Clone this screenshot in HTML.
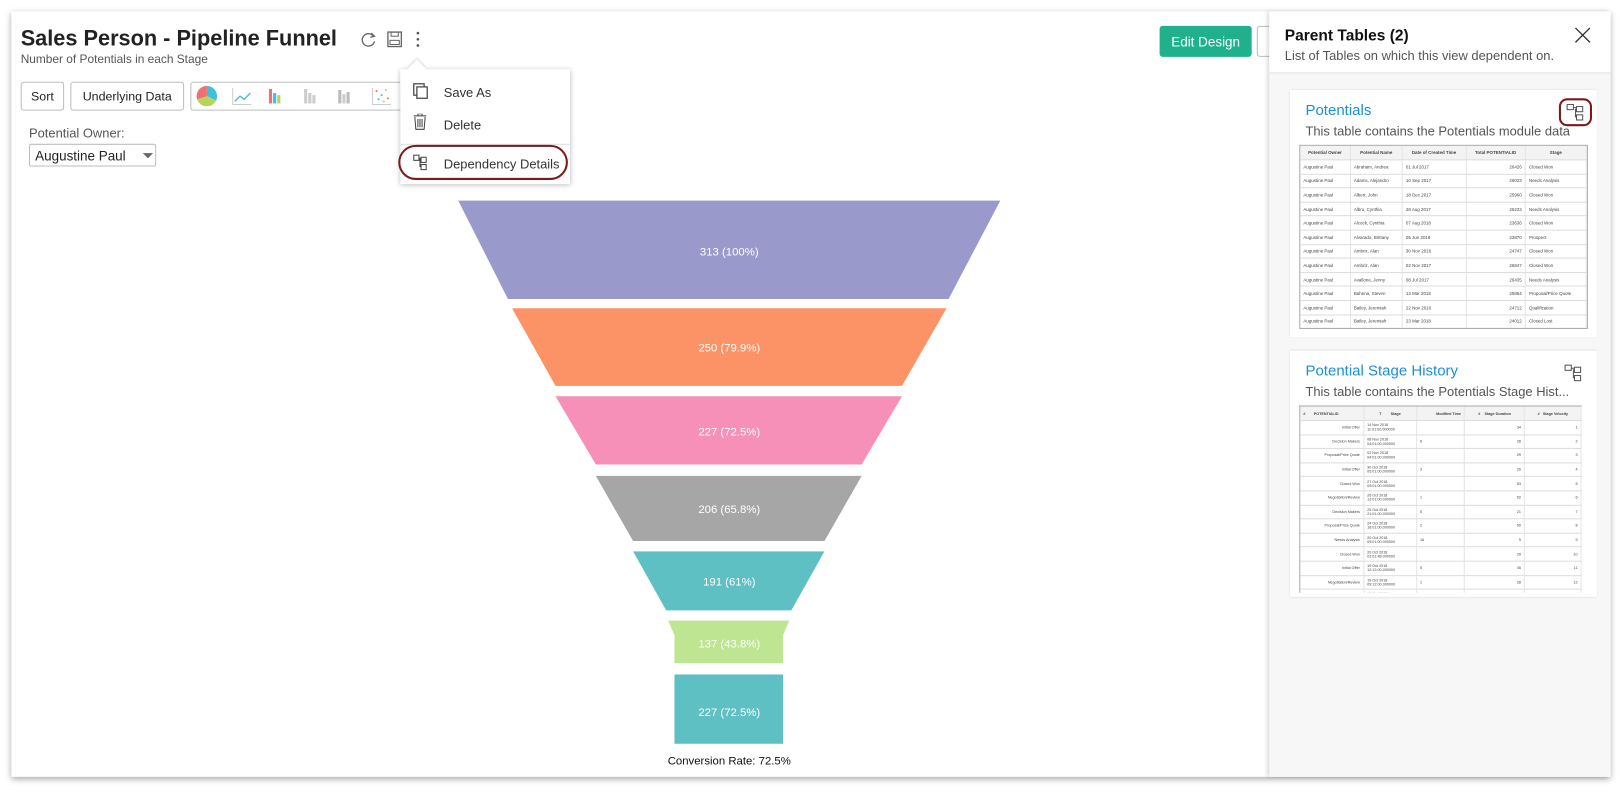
<!DOCTYPE html>
<html><head><meta charset="utf-8">
<style>
html,body{margin:0;padding:0;background:#fff;overflow:hidden}
body{width:1622px;height:798px;position:relative;font-family:"Liberation Sans",sans-serif}
#s{position:absolute;left:0;top:0;width:1568px;height:772px;transform:scale(1.03444);transform-origin:0 0}
.a{position:absolute}
.frame{left:11px;top:11px;width:1546px;height:740px;background:#fff;box-shadow:0 2px 6px rgba(0,0,0,.35)}
.btn{position:absolute;border:1px solid #bdbdbd;border-radius:3px;background:#fff;font-size:12px;color:#222;display:flex;align-items:center;justify-content:center;box-sizing:border-box}
.menu{left:387px;top:67px;width:164px;height:111px;background:#fff;box-shadow:0 1px 5px rgba(0,0,0,.3)}
.mi{position:absolute;left:42px;font-size:12.5px;color:#333}
.panel{left:1227px;top:11px;width:330px;height:740px;background:#f7f7f7;box-shadow:-2px 0 4px rgba(0,0,0,.15)}
.card{position:absolute;left:20px;width:297px;background:#fff;box-shadow:0 0 2px rgba(0,0,0,.15)}
.ct{position:absolute;left:15px;font-size:14.5px;color:#1a8fdc}
.cd{position:absolute;left:15px;font-size:12.5px;color:#555;white-space:nowrap}
table{border-collapse:collapse;font-size:4.3px;color:#444;width:100%}
td,th{border-bottom:1px solid #ddd;border-right:1px solid #e4e4e4;padding:0 3px;height:12.6px;white-space:nowrap}
th{background:#f3f3f3;font-weight:bold;height:13px}
.tb{position:absolute;border:1px solid #aaa;overflow:hidden;background:#fff}
.r{text-align:right}
</style></head><body><div id="s">
<div class="a frame"></div>
<div class="a" style="left:20px;top:26px;font-size:21px;font-weight:bold;color:#222">Sales Person - Pipeline Funnel</div>
<div class="a" style="left:20px;top:52px;font-size:11.5px;color:#555">Number of Potentials in each Stage</div>
<svg class="a" style="left:347px;top:29px" width="70" height="20" viewBox="0 0 70 20">
<path d="M14 6 A6 6 0 1 0 15 11" fill="none" stroke="#666" stroke-width="1.3"/><path d="M12 3 L15 6 L11 7" fill="none" stroke="#666" stroke-width="1.3"/>
<rect x="28" y="2" width="13" height="14" fill="none" stroke="#666" stroke-width="1.3"/><rect x="31" y="2" width="7" height="4" fill="none" stroke="#666"/><rect x="30" y="10" width="9" height="4" fill="none" stroke="#666"/>
<circle cx="57" cy="3" r="1.3" fill="#555"/><circle cx="57" cy="9" r="1.3" fill="#555"/><circle cx="57" cy="15" r="1.3" fill="#555"/>
</svg>
<div class="btn" style="left:20px;top:79px;width:42px;height:28px">Sort</div>
<div class="btn" style="left:68px;top:79px;width:110px;height:28px">Underlying Data</div>
<div class="btn" style="left:184px;top:79px;width:210px;height:28px"></div>
<svg class="a" style="left:190px;top:83px" width="200" height="20" viewBox="0 0 200 20">
<path d="M10 10 L10 0 A10 10 0 0 1 19 14 Z" fill="#3ec0d8"/><path d="M10 10 L19 14 A10 10 0 0 1 0.5 13 Z" fill="#b6d35a"/><path d="M10 10 L0.5 13 A10 10 0 0 1 10 0 Z" fill="#ef7070"/>
<path d="M35 18 L53 18 M35 2 L35 18" stroke="#ccc"/><path d="M37 15 L42 10 L46 13 L52 7" fill="none" stroke="#3ec0d8" stroke-width="1.3"/>
<rect x="70" y="3" width="3" height="14" fill="#ef7070"/><rect x="74" y="7" width="3" height="10" fill="#3ec0d8"/><rect x="78" y="9" width="3" height="8" fill="#b6d35a"/>
<rect x="104" y="3" width="3" height="14" fill="#ccc"/><rect x="108" y="7" width="3" height="10" fill="#ccc"/><rect x="112" y="9" width="3" height="8" fill="#ccc"/>
<rect x="137" y="4" width="3" height="13" fill="#bbb"/><rect x="141" y="8" width="3" height="9" fill="#ccc"/><rect x="145" y="6" width="3" height="11" fill="#bbb"/>
<path d="M170 2 L170 18 L188 18" stroke="#ccc" fill="none"/><circle cx="174" cy="5" r="1" fill="#ef7070"/><circle cx="179" cy="9" r="1" fill="#3ec0d8"/><circle cx="183" cy="4" r="1" fill="#b6d35a"/><circle cx="176" cy="13" r="1" fill="#3ec0d8"/><circle cx="185" cy="12" r="1" fill="#ef7070"/><circle cx="181" cy="15" r="1" fill="#b6d35a"/>
</svg>
<div class="a" style="left:28px;top:122px;font-size:12.5px;color:#555">Potential Owner:</div>
<div class="btn" style="left:28px;top:139px;width:123px;height:22px;justify-content:flex-start;padding-left:5px;font-size:13px;color:#222;border-radius:2px">Augustine Paul</div>
<div class="a" style="left:138px;top:148px;width:0;height:0;border-left:5px solid transparent;border-right:5px solid transparent;border-top:5px solid #666"></div>

<div class="a menu">
<div class="a" style="left:10px;top:-7px;width:12px;height:12px;background:#fff;transform:rotate(45deg);box-shadow:-1px -1px 2px rgba(0,0,0,.15)"></div>
<div class="a" style="left:0;top:0;width:164px;height:20px;background:#fff"></div>
<svg class="a" style="left:12px;top:13px" width="16" height="16"><rect x="1" y="1" width="10" height="11" fill="none" stroke="#444" stroke-width="1.2"/><rect x="4" y="4" width="10" height="11" fill="#fff" stroke="#444" stroke-width="1.2"/></svg>
<div class="mi" style="top:16px">Save As</div>
<svg class="a" style="left:12px;top:43px" width="16" height="16"><path d="M1 2 L13 2 M5 2 L5 0 L9 0 L9 2 M2 3 L3 15 L11 15 L12 3 M5 5 L5 13 M7 5 L7 13 M9 5 L9 13" fill="none" stroke="#444"/></svg>
<div class="mi" style="top:47px">Delete</div>
<div class="a" style="left:0;top:72px;width:164px;height:1px;background:#ddd"></div>
<svg class="a" style="left:12px;top:82px" width="16" height="16"><rect x="1" y="1" width="5" height="5" fill="none" stroke="#444"/><rect x="8" y="3" width="5" height="5" fill="none" stroke="#444"/><rect x="8" y="10" width="5" height="5" fill="none" stroke="#444"/><path d="M6 4 L8 4 M7 4 L7 12 L8 12" fill="none" stroke="#444"/></svg>
<div class="mi" style="top:85px">Dependency Details</div>
<div class="a" style="left:-2px;top:73px;width:164px;height:34px;border:2px solid #7a1a1a;box-sizing:border-box;border-radius:40px"></div>
</div>

<div class="a" style="left:1121px;top:25px;width:89px;height:30px;background:#1eb18c;border-radius:3px;color:#fff;font-size:13px;display:flex;align-items:center;justify-content:center">Edit Design</div>
<div class="a" style="left:1215px;top:25px;width:20px;height:30px;border:1px solid #bbb;border-radius:3px;box-sizing:border-box"></div>

<svg class="a" style="left:0;top:0" width="1220" height="760">
<polygon points="443,194 967,194 917,289 491,289" fill="#9999cc"/>
<polygon points="495,298 915,298 872,373 537,373" fill="#fc9366"/>
<polygon points="537,383 872,383 833,449 576,449" fill="#f690b8"/>
<polygon points="576,460 833,460 797,523 612,523" fill="#a6a6a6"/>
<polygon points="612,533 797,533 765,590 644,590" fill="#5fc0c4"/>
<polygon points="646,600 763,600 757,614 757,641 652,641 652,614" fill="#bde592"/>
<rect x="652" y="652" width="105" height="67" fill="#5fc0c4"/>
<g fill="#fff" font-size="11" font-family="Liberation Sans" text-anchor="middle">
<text x="705" y="247">313 (100%)</text><text x="705" y="340">250 (79.9%)</text><text x="705" y="421">227 (72.5%)</text><text x="705" y="496">206 (65.8%)</text><text x="705" y="566">191 (61%)</text><text x="705" y="626">137 (43.8%)</text><text x="705" y="692">227 (72.5%)</text>
</g>
<text x="705" y="739" font-size="11" font-family="Liberation Sans" text-anchor="middle" fill="#111">Conversion Rate: 72.5%</text>
</svg>

<div class="a panel">
<div class="a" style="left:0;top:0;width:330px;height:59px;background:#fff;border-bottom:1px solid #e2e2e2"></div>
<div class="a" style="left:15px;top:15px;font-size:15px;font-weight:bold;color:#111">Parent Tables (2)</div>
<div class="a" style="left:15px;top:36px;font-size:12.5px;color:#555">List of Tables on which this view dependent on.</div>
<svg class="a" style="left:295px;top:15px" width="16" height="16"><path d="M1 1 L15 15 M15 1 L1 15" stroke="#333" stroke-width="1.3"/></svg>

<div class="card" style="top:76px;height:239px">
<div class="ct" style="top:12px">Potentials</div>
<div class="cd" style="top:33px">This table contains the Potentials module data</div>
<div class="a" style="left:260px;top:8px;width:32px;height:27px;border:2px solid #7a1a1a;border-radius:8px;box-sizing:border-box"></div>
<svg class="a" style="left:267px;top:13px" width="18" height="17"><rect x="1" y="1" width="6" height="5" fill="none" stroke="#555"/><rect x="10" y="3" width="6" height="5" fill="none" stroke="#555"/><rect x="10" y="11" width="6" height="5" fill="none" stroke="#555"/><path d="M7 4 L10 4 M9 5 L9 13 L10 13" fill="none" stroke="#555"/></svg>
<div class="tb" style="left:9px;top:53px;width:277px;height:176px">
<table><tr><th>Potential Owner</th><th>Potential Name</th><th>Date of Created Time</th><th>Total POTENTIALID</th><th>Stage</th></tr>
<tr><td>Augustine Paul</td><td>Abraham, Andrea</td><td>01 Jul 2017</td><td class="r">26426</td><td>Closed Won</td></tr>
<tr><td>Augustine Paul</td><td>Adams, Alejandro</td><td>10 Sep 2017</td><td class="r">26023</td><td>Needs Analysis</td></tr>
<tr><td>Augustine Paul</td><td>Albert, John</td><td>18 Dec 2017</td><td class="r">25960</td><td>Closed Won</td></tr>
<tr><td>Augustine Paul</td><td>Albro, Cynthia</td><td>28 Aug 2017</td><td class="r">26233</td><td>Needs Analysis</td></tr>
<tr><td>Augustine Paul</td><td>Alcock, Cynthia</td><td>07 Aug 2018</td><td class="r">23636</td><td>Closed Won</td></tr>
<tr><td>Augustine Paul</td><td>Alvarado, Brittany</td><td>05 Jun 2018</td><td class="r">23870</td><td>Prospect</td></tr>
<tr><td>Augustine Paul</td><td>Ambriz, Alan</td><td>30 Nov 2016</td><td class="r">24747</td><td>Closed Won</td></tr>
<tr><td>Augustine Paul</td><td>Ambriz, Alan</td><td>02 Nov 2017</td><td class="r">26847</td><td>Closed Won</td></tr>
<tr><td>Augustine Paul</td><td>Avallone, Jenny</td><td>08 Jul 2017</td><td class="r">26435</td><td>Needs Analysis</td></tr>
<tr><td>Augustine Paul</td><td>Bahena, Steven</td><td>13 Mar 2018</td><td class="r">25864</td><td>Proposal/Price Quote</td></tr>
<tr><td>Augustine Paul</td><td>Bailey, Jeremiah</td><td>22 Nov 2016</td><td class="r">24712</td><td>Qualification</td></tr>
<tr><td>Augustine Paul</td><td>Bailey, Jeremiah</td><td>23 Mar 2018</td><td class="r">24012</td><td>Closed Lost</td></tr>
</table></div>
</div>

<div class="card" style="top:328px;height:238px">
<div class="ct" style="top:12px">Potential Stage History</div>
<div class="cd" style="top:33px">This table contains the Potentials Stage Hist...</div>
<svg class="a" style="left:265px;top:13px" width="18" height="17"><rect x="1" y="1" width="6" height="5" fill="none" stroke="#555"/><rect x="10" y="3" width="6" height="5" fill="none" stroke="#555"/><rect x="10" y="11" width="6" height="5" fill="none" stroke="#555"/><path d="M7 4 L10 4 M9 5 L9 13 L10 13" fill="none" stroke="#555"/></svg>
<div class="tb" style="left:9px;top:53px;width:272px;height:180px;border-right:none;border-bottom:none">
<table style="font-size:3.6px"><tr><th style="text-align:left"># &nbsp;&nbsp;&nbsp;&nbsp;&nbsp;&nbsp;&nbsp;POTENTIALID</th><th>T &nbsp;&nbsp;&nbsp;&nbsp;&nbsp;&nbsp;&nbsp;&nbsp;Stage</th><th class="r">Modified Time</th><th># &nbsp;&nbsp;&nbsp;Stage Duration</th><th># &nbsp;&nbsp;Stage Velocity</th></tr>
<tr><td class="r">Initial Offer</td><td>14 Nov 2018<br>11:01:00.000000</td><td></td><td class="r">34</td><td class="r">1</td></tr>
<tr><td class="r">Decision Makers</td><td>08 Nov 2018<br>04:01:00.000000</td><td>6</td><td class="r">28</td><td class="r">2</td></tr>
<tr><td class="r">Proposal/Price Quote</td><td>02 Nov 2018<br>04:01:00.000000</td><td></td><td class="r">29</td><td class="r">3</td></tr>
<tr><td class="r">Initial Offer</td><td>30 Oct 2018<br>05:01:00.000000</td><td>3</td><td class="r">26</td><td class="r">4</td></tr>
<tr><td class="r">Closed Won</td><td>27 Oct 2018<br>09:01:00.000000</td><td></td><td class="r">53</td><td class="r">5</td></tr>
<tr><td class="r">Negotiation/Review</td><td>26 Oct 2018<br>12:01:00.000000</td><td>1</td><td class="r">52</td><td class="r">6</td></tr>
<tr><td class="r">Decision Makers</td><td>25 Oct 2018<br>21:01:00.000000</td><td>5</td><td class="r">21</td><td class="r">7</td></tr>
<tr><td class="r">Proposal/Price Quote</td><td>24 Oct 2018<br>18:01:00.000000</td><td>2</td><td class="r">50</td><td class="r">8</td></tr>
<tr><td class="r">Needs Analysis</td><td>20 Oct 2018<br>09:01:00.000000</td><td>16</td><td class="r">9</td><td class="r">9</td></tr>
<tr><td class="r">Closed Won</td><td>20 Oct 2018<br>02:01:48.000000</td><td></td><td class="r">29</td><td class="r">10</td></tr>
<tr><td class="r">Initial Offer</td><td>19 Oct 2018<br>12:12:00.000000</td><td>5</td><td class="r">45</td><td class="r">11</td></tr>
<tr><td class="r">Negotiation/Review</td><td>19 Oct 2018<br>09:12:00.000000</td><td>1</td><td class="r">28</td><td class="r">12</td></tr>
<tr><td class="r">Proposal/Price Quote</td><td>15 Oct 2018<br>09:12:00.000000</td><td></td><td class="r">31</td><td class="r">13</td></tr>
</table></div>
</div>
</div>
</div></body></html>
